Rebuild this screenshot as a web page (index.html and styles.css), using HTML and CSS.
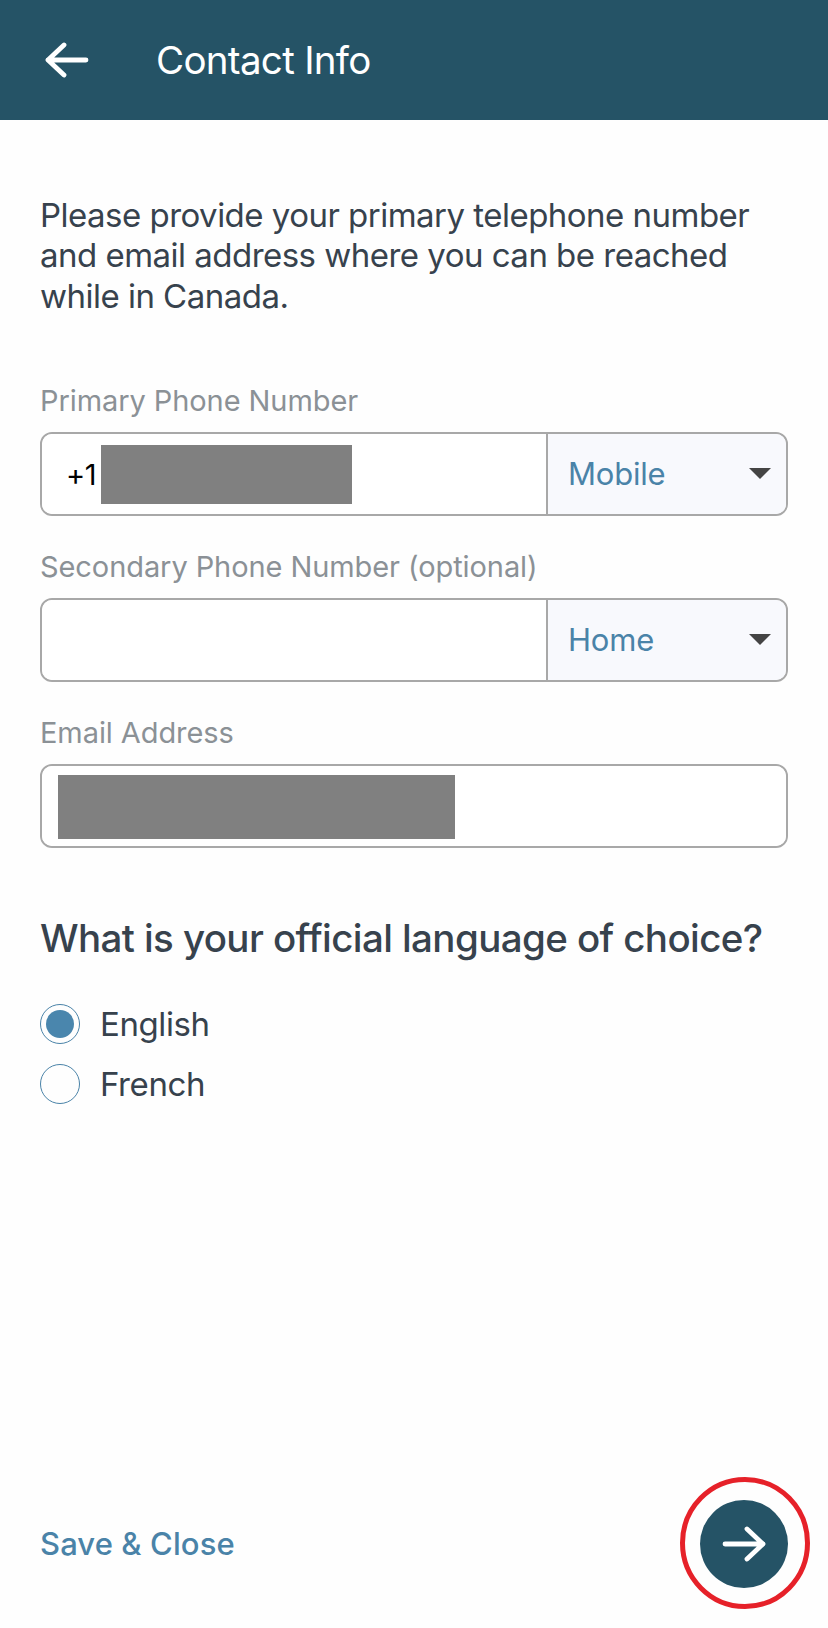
FILE: index.html
```html
<!DOCTYPE html>
<html lang="en">
<head>
    <meta charset="UTF-8" />
    <meta name="viewport" content="width=device-width, initial-scale=1.0" />
    <title>Contact Info</title>
    <link rel="stylesheet" href="styles.css">
</head>

<body>
    <header class="topbar">
        <svg class="arrow" viewBox="0 0 44 36" aria-label="Back">
            <path d="M41 18H3M19 3L3 18L19 33" />
        </svg>
        <h1>Contact Info</h1>
    </header>

    <main>
        <p class="intro">Please provide your primary telephone number<br>and email address where you can be reached<br>while in Canada.</p>

        <div class="label">Primary Phone Number</div>
        <div class="field">
            <div class="input"><span class="prefix">+1</span><span class="redacted phone"></span></div>
            <div class="select"><span>Mobile</span><span class="caret"></span></div>
        </div>

        <div class="label">Secondary Phone Number (optional)</div>
        <div class="field">
            <div class="input"></div>
            <div class="select"><span>Home</span><span class="caret"></span></div>
        </div>

        <div class="label">Email Address</div>
        <div class="field">
            <div class="input email"><span class="redacted mail"></span></div>
        </div>

        <h2>What is your official language of choice?</h2>

        <div class="option"><span class="radio checked"></span><span>English</span></div>
        <div class="option"><span class="radio"></span><span>French</span></div>
    </main>

    <footer>
        <a class="save">Save &amp; Close</a>
        <div class="next">
            <svg class="arrow" viewBox="0 0 44 36" aria-label="Next">
                <path d="M3 18H41M25 3L41 18L25 33" />
            </svg>
            <svg class="ring" viewBox="0 0 132 134">
                <ellipse cx="66" cy="67" rx="62.500" ry="63.500" />
            </svg>
        </div>
    </footer>
</body>
</html>
```
FILE: styles.css
```css
* {
    box-sizing: border-box;
}

body {
    margin: 0;
    height: 1628px;
    display: flex;
    flex-direction: column;
    background: #fefefe;
    color: #37424d;
    font-family: Inter, "Liberation Sans", sans-serif;
}

.topbar {
    height: 120px;
    flex: none;
    display: flex;
    align-items: center;
    padding: 0 0 0 45px;
    background: #255366;
    color: #fff;
}

.arrow {
    width: 44px;
    height: 36px;
    fill: none;
    stroke: #fff;
    stroke-width: 4.8;
    stroke-linecap: round;
    stroke-linejoin: round;
}

h1 {
    margin: 0 0 0 67px;
    font-size: 38.5px;
    font-weight: 400;
    line-height: 46px;
    letter-spacing: -0.7px;
}

main {
    flex: 1;
    padding: 75px 40px 0;
}

.intro {
    margin: 0;
    font-size: 33px;
    line-height: 40.4px;
    letter-spacing: -0.52px;
    white-space: nowrap;
}

.label {
    height: 36px;
    margin: 67px 0 13px;
    color: #8b9196;
    font-size: 29px;
    line-height: 36px;
    letter-spacing: -0.08px;
}

.field + .label {
    margin-top: 33px;
}

.field {
    display: flex;
    height: 84px;
    border: 2px solid #a8a8a8;
    border-radius: 12px;
    overflow: hidden;
}

.input {
    flex: 1;
    display: flex;
    align-items: center;
    padding-left: 24px;
    background: #fff;
}

.prefix {
    width: 35px;
    color: #000;
    font-size: 29px;
    letter-spacing: -0.5px;
}

.redacted {
    background: #808080;
}

.phone {
    width: 251px;
    height: 59px;
}

.email {
    align-items: flex-start;
    padding: 9px 0 0 16px;
}

.mail {
    width: 397px;
    height: 64px;
}

.select {
    width: 240px;
    display: flex;
    align-items: center;
    justify-content: space-between;
    padding: 0 15px 2px 20px;
    border-left: 2px solid #a8a8a8;
    background: #f8f9fd;
    color: #4a83a8;
    font-size: 31px;
    letter-spacing: -0.2px;
}

/* dropdown triangle */
.caret {
    border: 11px solid transparent;
    border-top-color: #444;
    border-bottom: 0;
}

h2 {
    margin: 66px 0 42px;
    font-size: 38.5px;
    font-weight: 500;
    line-height: 48px;
    letter-spacing: -0.6px;
    white-space: nowrap;
}

.option {
    display: flex;
    align-items: center;
    gap: 20px;
    height: 40px;
    margin-bottom: 20px;
    font-size: 33px;
    letter-spacing: -0.4px;
}

.radio {
    width: 40px;
    height: 40px;
    padding: 5px;
    border: 1px solid #4a83a8;
    border-radius: 50%;
}

.checked {
    background: #4a86ad content-box;
}

footer {
    flex: none;
    display: flex;
    align-items: center;
    justify-content: space-between;
    padding: 0 40px;
    height: 88px;
    margin-bottom: 40px;
}

.save {
    padding-bottom: 2px;
    color: #4a83a8;
    font-size: 31px;
    font-weight: 500;
    letter-spacing: 0.1px;
}

.next {
    position: relative;
    width: 88px;
    height: 88px;
    display: flex;
    align-items: center;
    justify-content: center;
    border-radius: 50%;
    background: #255366;
}

/* highlight drawn round the button */
.ring {
    position: absolute;
    top: -24px;
    left: -21px;
    width: 132px;
    height: 134px;
    fill: none;
    stroke: #e62129;
    stroke-width: 5;
}
```
